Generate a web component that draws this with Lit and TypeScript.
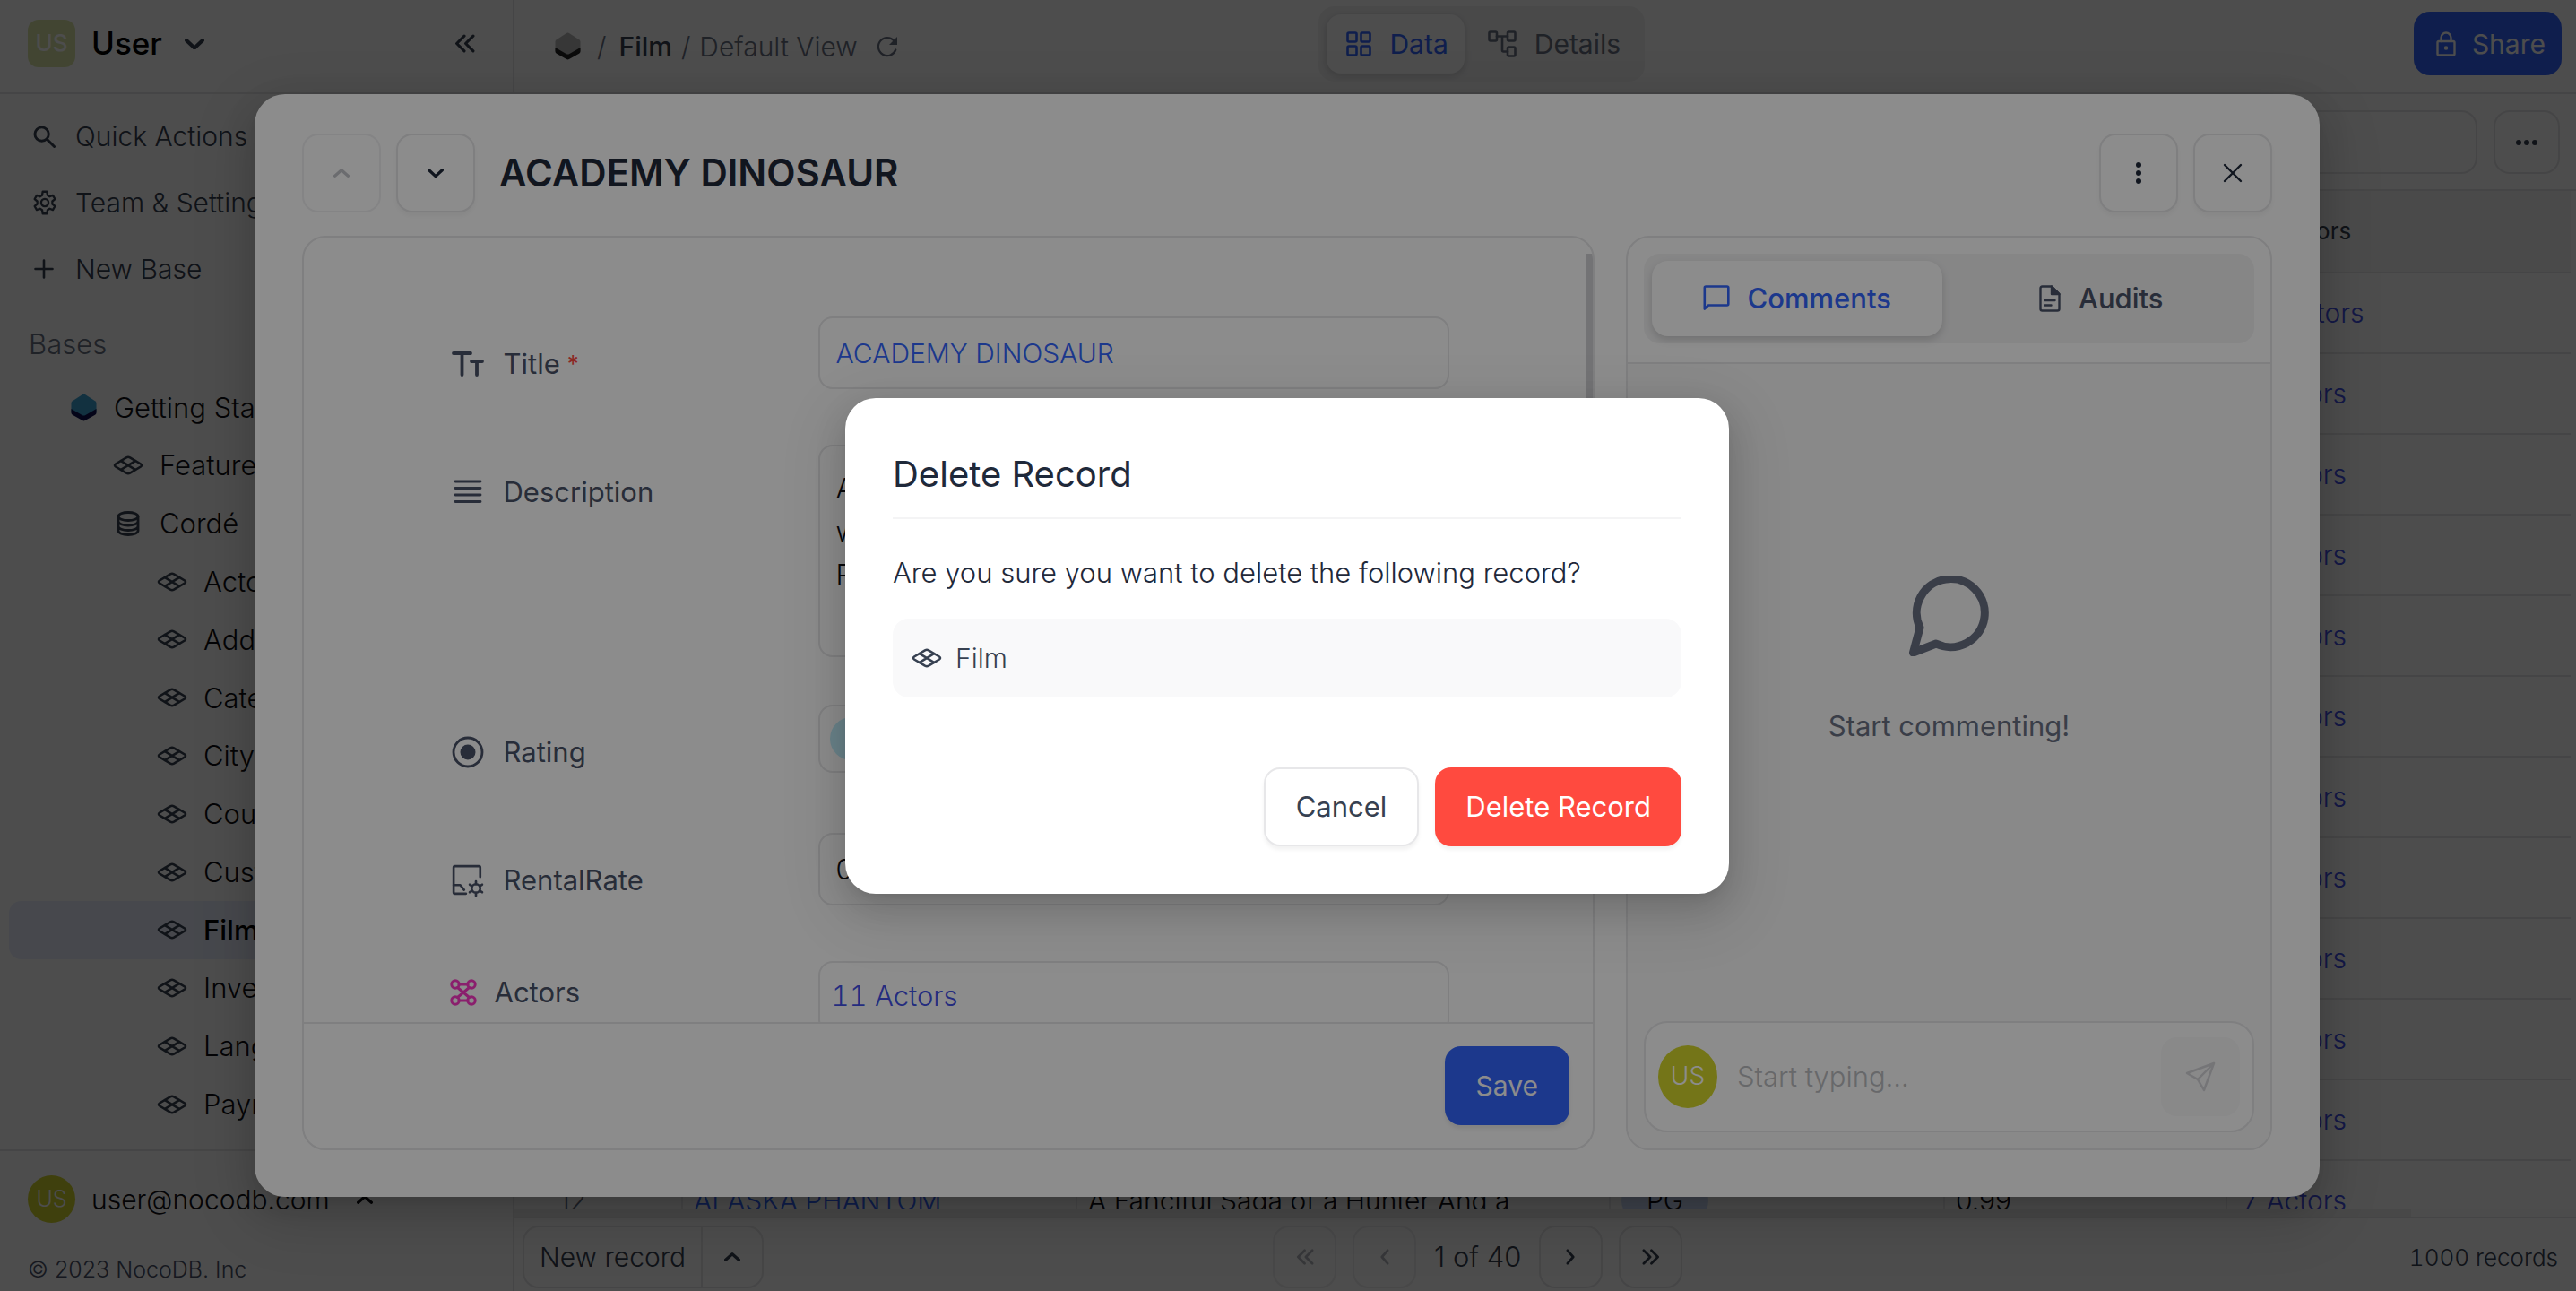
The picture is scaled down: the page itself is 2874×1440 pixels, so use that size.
import { LitElement, html, svg, css, nothing, TemplateResult } from "lit";
import { customElement, property } from "lit/decorators.js";
import { classMap } from "lit/directives/class-map.js";

const gear = svg`<path d="M12 15.500a3.500 3.500 0 1 0 0-7 3.500 3.500 0 0 0 0 7z"/><path d="M10 1.500h4l.6 3.500 2 1.200 3.100-1.100 2 3.500-2.500 2.100v2.600l2.500 2.100-2 3.500-3.100-1.100-2 1.200-.6 3.500h-4l-.6-3.500-2-1.200-3.100 1.100-2-3.500 2.500-2.100v-2.600l-2.500-2.100 2-3.500 3.100 1.100 2-1.200z"/>`;

const ICONS: Record<string, { box: string; body: TemplateResult; stroke?: number }> = {
  down: { box: "0 0 22 12", body: svg`<path d="M2 2l9 8.500 9-8.500"/>`, stroke: 4 },
  up: { box: "0 0 22 12", body: svg`<path d="M2 10l9-8 9 8"/>`, stroke: 4 },
  left: { box: "0 0 12 20", body: svg`<path d="M10 2L3 10l7 8"/>`, stroke: 3 },
  right: { box: "0 0 12 20", body: svg`<path d="M2 2l7 8-7 8"/>`, stroke: 3 },
  dleft: { box: "0 0 22 20", body: svg`<path d="M10.500 2L2.500 10l8 8M20 2l-8 8 8 8"/>`, stroke: 3 },
  dright: { box: "0 0 22 20", body: svg`<path d="M2 2l8 8-8 8M11.500 2l8 8-8 8"/>`, stroke: 3 },
  search: { box: "0 0 26 26", body: svg`<circle cx="10" cy="10" r="8"/><path d="M16 16l8.500 8.500"/>`, stroke: 3 },
  gear: { box: "0 0 24 24", body: gear, stroke: 2 },
  plus: { box: "0 0 24 24", body: svg`<path d="M12 2.500v19M2.500 12h19"/>`, stroke: 2.6 },
  table: {
    box: "0 0 34 22",
    body: svg`<path d="M15 2.300Q17 1.300 19 2.300L31 9.500Q33 11 31 12.500L19 19.700Q17 20.700 15 19.700L3 12.500Q1 11 3 9.500Z"/><path d="M9 6.200L25 15.800M25 6.200L9 15.800"/>`,
    stroke: 2.6,
  },
  database: {
    box: "0 0 26 28",
    body: svg`<ellipse cx="13" cy="6" rx="11" ry="4.500"/><path d="M2 6v16c0 2.500 5 4.500 11 4.500s11-2 11-4.500V6M2 11.500c0 2.500 5 4.500 11 4.500s11-2 11-4.500M2 17c0 2.500 5 4.500 11 4.500s11-2 11-4.500"/>`,
    stroke: 2.8,
  },
  base: {
    box: "0 0 30 32",
    body: svg`<path d="M2 8.500L13.500 1Q15 .2 16.500 1L28 8.500Q29.500 9.500 29.500 11v11L15 31 .5 22V11Q.5 9.500 2 8.500Z" fill="#3da4d6" stroke="none"/><path d="M.5 17.500L13.500 25q1.500.8 3 0l13-7.500V22q0 1.600-1.500 2.500L16.500 31q-1.500.8-3 0L2 24.500Q.5 23.600.5 22z" fill="#121252" stroke="none"/>`,
  },
  basegray: {
    box: "0 0 30 32",
    body: svg`<path d="M2 8.500L13.500 1Q15 .2 16.500 1L28 8.500Q29.500 9.500 29.500 11v11L15 31 .5 22V11Q.5 9.500 2 8.500Z" fill="#b8b8b8" stroke="none"/><path d="M.5 17.500L13.500 25q1.500.8 3 0l13-7.500V22q0 1.600-1.500 2.500L16.500 31q-1.500.8-3 0L2 24.500Q.5 23.600.5 22z" fill="#262626" stroke="none"/>`,
  },
  refresh: {
    box: "0 0 26 26",
    body: svg`<path d="M22.300 16.500A10 10 0 1 1 20.500 6.500"/><path d="M24 2v9h-9z" fill="currentColor" stroke="none"/>`,
    stroke: 2.2,
  },
  grid: {
    box: "0 0 28 28",
    body: svg`<rect x="1.500" y="1.500" width="10" height="10" rx="1.500"/><rect x="16.500" y="1.500" width="10" height="10" rx="1.500"/><rect x="1.500" y="16.500" width="10" height="10" rx="1.500"/><rect x="16.500" y="16.500" width="10" height="10" rx="1.500"/>`,
    stroke: 2.6,
  },
  flow: {
    box: "0 0 32 30",
    body: svg`<rect x="1.500" y="1.500" width="8.500" height="10" rx="1.500"/><rect x="22" y="1.500" width="8.500" height="10" rx="1.500"/><rect x="22" y="18.500" width="8.500" height="10" rx="1.500"/><path d="M10 6.500h12M16 6.500v15.500q0 1.500 1.500 1.500H22"/>`,
    stroke: 2.6,
  },
  lock: {
    box: "0 0 22 28",
    body: svg`<rect x="1.500" y="11" width="19" height="15.500" rx="1.500"/><path d="M5.500 11V7a5.500 5.500 0 0 1 11 0v4"/><circle cx="11" cy="18.500" r="2.300" fill="currentColor" stroke="none"/>`,
    stroke: 2.4,
  },
  hdots: { box: "0 0 26 8", body: svg`<g fill="currentColor" stroke="none"><circle cx="4" cy="4" r="3"/><circle cx="13" cy="4" r="3"/><circle cx="22" cy="4" r="3"/></g>` },
  vdots: { box: "0 0 8 26", body: svg`<g fill="currentColor" stroke="none"><circle cx="4" cy="4" r="3"/><circle cx="4" cy="13" r="3"/><circle cx="4" cy="22" r="3"/></g>` },
  close: { box: "0 0 22 22", body: svg`<path d="M2 2l18 18M20 2L2 20"/>`, stroke: 2.4 },
  bubble: {
    box: "0 0 30 30",
    body: svg`<path d="M1.800 26.500V3q0-1.500 1.500-1.500h23.500q1.500 0 1.500 1.500v18q0 1.500-1.500 1.500H6z"/>`,
    stroke: 2.6,
  },
  file: {
    box: "0 0 24 30",
    body: svg`<path d="M14 1.500H3.500Q1.500 1.500 1.500 3.500v23q0 2 2 2h17q2 0 2-2V10z"/><path d="M14 1.500V10h8.500z" fill="currentColor"/><path d="M6.500 17h11M6.500 22.500h7"/>`,
    stroke: 2.4,
  },
  chat: {
    box: "0 0 90 90",
    body: svg`<path d="M12 58A38 38 0 1 1 30 76L4.500 86z"/>`,
    stroke: 9,
  },
  send: {
    box: "0 0 34 34",
    body: svg`<path d="M32 2L2 13l12 7 7 12z"/><path d="M32 2L14 20"/>`,
    stroke: 2.4,
  },
  text: {
    box: "0 0 36 28",
    body: svg`<path d="M2 2h19M11.500 2v24M22 11h12M28 11v15"/>`,
    stroke: 3.8,
  },
  lines: { box: "0 0 36 28", body: svg`<path d="M4 2h28M4 9.500h28M4 17h28M4 24.500h28"/>`, stroke: 2.8 },
  radio: {
    box: "0 0 36 36",
    body: svg`<circle cx="18" cy="18" r="16"/><circle cx="18" cy="18" r="8.500" fill="currentColor" stroke="none"/>`,
    stroke: 2.8,
  },
  formula: {
    box: "0 0 34 34",
    body: svg`<path d="M30 13.500V3.500Q30 2 28.500 2h-25Q2 2 2 3.500v26Q2 31 3.500 31H15"/><path d="M2 22h7l4 5"/><path d="M25.500 18v3M25.500 30v3M19 21.500l2.500 1.500M32 21.500L29.500 23M19 29.500l2.500-1.500M32 29.500L29.500 28"/><circle cx="25.500" cy="25.500" r="4.500"/>`,
    stroke: 2.5,
  },
  links: {
    box: "0 0 30 30",
    body: svg`<circle cx="6" cy="6" r="4.200"/><circle cx="24" cy="6" r="4.200"/><circle cx="6" cy="24" r="4.200"/><circle cx="24" cy="24" r="4.200"/><path d="M10 6h10M10 24h10M8.500 9.500l13 11M21.500 9.500l-13 11"/>`,
    stroke: 3,
  },
};

function icon(name: string, width: number) {
  const { box, body, stroke } = ICONS[name];
  const [, , w, h] = box.split(" ").map(Number);
  return html`<svg
    class="icon"
    width=${width}
    height=${Math.round((width * h) / w)}
    viewBox=${box}
    fill="none"
    stroke="currentColor"
    stroke-width=${stroke ?? 2}
    stroke-linecap="round"
    stroke-linejoin="round"
    aria-hidden="true"
  >${body}</svg>`;
}

const shared = css`
  *,
  *::before,
  *::after {
    box-sizing: border-box;
  }
  .icon {
    display: block;
    flex: none;
  }
  button,
  input,
  textarea {
    font: inherit;
    color: inherit;
    margin: 0;
  }
  button {
    display: flex;
    align-items: center;
    justify-content: center;
    padding: 0;
    border: 0;
    background: none;
    white-space: nowrap;
  }
  a {
    color: inherit;
    text-decoration: none;
  }
  h1,
  h2,
  p,
  ul {
    margin: 0;
    padding: 0;
  }
  ul {
    list-style: none;
  }
  .outlined {
    border: 2px solid #e7e7e9;
    border-radius: 18px;
    background: #fff;
  }
  .avatar {
    flex: none;
    display: grid;
    place-items: center;
    border-radius: 50%;
    background: #d3d62c;
    color: #fff;
  }
`;

type Node = { icon: string; label: string; level: number; active?: boolean };

const TREE: Node[] = [
  { icon: "base", label: "Getting Started", level: 0 },
  { icon: "table", label: "Features", level: 1 },
  { icon: "database", label: "Cordé", level: 1 },
  { icon: "table", label: "Actor", level: 2 },
  { icon: "table", label: "Address", level: 2 },
  { icon: "table", label: "Category", level: 2 },
  { icon: "table", label: "City", level: 2 },
  { icon: "table", label: "Country", level: 2 },
  { icon: "table", label: "Customer", level: 2 },
  { icon: "table", label: "Film", level: 2, active: true },
  { icon: "table", label: "Inventory", level: 2 },
  { icon: "table", label: "Language", level: 2 },
  { icon: "table", label: "Payment", level: 2 },
];

@customElement("side-nav")
class SideNav extends LitElement {
  static styles = [
    shared,
    css`
      :host {
        display: flex;
        flex-direction: column;
        border-right: 2px solid #e7e7e9;
        background: #fff;
        color: #374151;
      }
      .workspace {
        display: flex;
        align-items: center;
        height: 105px;
        padding: 0 42px 6px 31px;
        border-bottom: 2px solid #e7e7e9;
      }
      .square {
        display: grid;
        place-items: center;
        width: 53px;
        height: 53px;
        border-radius: 12px;
        background: #dbe8a8;
        color: #fff;
        font-size: 26px;
        font-weight: 500;
      }
      .name {
        margin: 0 25px 0 18px;
        font-size: 35px;
        font-weight: 500;
        color: #000;
      }
      .collapse {
        margin-left: auto;
      }
      .menu {
        padding-top: 10px;
      }
      .menu button {
        height: 74px;
        gap: 22px;
        padding-left: 36px;
        font-size: 30px;
      }
      .slot {
        display: grid;
        place-items: center;
        width: 26px;
      }
      .heading {
        padding: 26px 32px 17px;
        line-height: 42px;
        color: #6a7184;
        font-size: 31px;
        font-weight: 300;
      }
      .tree {
        flex: 1;
        display: flex;
        flex-direction: column;
        padding: 0 10px 18px;
        color: #101015;
      }
      .node {
        flex: 1;
        display: flex;
        align-items: center;
        gap: 18px;
        border-radius: 14px;
        white-space: nowrap;
      }
      .node svg {
        color: #374151;
      }
      .level0 {
        padding-left: 68px;
        gap: 19px;
      }
      .level1 {
        padding-left: 116px;
      }
      .level2 {
        padding-left: 165px;
      }
      .glyph {
        display: grid;
        place-items: center;
        min-width: 30px;
      }
      .level1 .glyph {
        width: 34px;
      }
      .active {
        background: #ebf0ff;
        color: #000;
        font-weight: 500;
      }
      .foot {
        border-top: 2px solid #e7e7e9;
        padding: 27px 31px 7px;
      }
      .account {
        gap: 18px;
        color: #101015;
        font-size: 30px;
      }
      .account .avatar {
        width: 53px;
        height: 53px;
        font-size: 25px;
      }
      .account .icon {
        margin-left: 12px;
      }
      .legal {
        margin-top: 35px;
        line-height: 34px;
        font-size: 25px;
        color: #4a5268;
      }
    `,
  ];

  render() {
    return html`
      <div class="workspace">
        <span class="square">US</span>
        <span class="name">User</span>
        ${icon("down", 22)}
        <button class="collapse" aria-label="Collapse sidebar">${icon("dleft", 23)}</button>
      </div>
      <div class="menu">
        <button><span class="slot">${icon("search", 25)}</span>Quick Actions</button>
        <button><span class="slot">${icon("gear", 28)}</span>Team &amp; Settings</button>
        <button><span class="slot">${icon("plus", 24)}</span>New Base</button>
      </div>
      <h2 class="heading">Bases</h2>
      <ul class="tree">
        ${TREE.map(
          (n) => html`<li class=${classMap({ node: true, active: !!n.active, [`level${n.level}`]: true })}>
            <span class="glyph">${icon(n.icon, n.icon === "table" ? 34 : n.icon === "base" ? 29 : 26)}</span>${n.label}
          </li>`
        )}
      </ul>
      <div class="foot">
        <button class="account">
          <span class="avatar">US</span>user@nocodb.com${icon("up", 18)}
        </button>
        <p class="legal">© 2023 NocoDB. Inc</p>
      </div>
    `;
  }
}

type Film = [title: string, description: string, rating: string, rate: string, actors: number];

const FILMS: Film[] = [
  ["ACADEMY DINOSAUR", "A Epic Drama of a Feminist And a", "PG", "0.99", 11],
  ["ACE GOLDFINGER", "A Astounding Epistle of a Database", "G", "4.99", 4],
  ["ADAPTATION HOLES", "A Astounding Reflection of a", "NC-17", "2.99", 5],
  ["AFFAIR PREJUDICE", "A Fanciful Documentary of a Frisbee", "G", "2.99", 5],
  ["AFRICAN EGG", "A Fast-Paced Documentary of a Pastry", "G", "2.99", 5],
  ["AGENT TRUMAN", "A Intrepid Panorama of a Robot", "PG", "2.99", 7],
  ["AIRPLANE SIERRA", "A Touching Saga of a Hunter And a", "PG-13", "4.99", 5],
  ["AIRPORT POLLOCK", "A Epic Tale of a Moose And a Girl", "R", "4.99", 4],
  ["ALABAMA DEVIL", "A Thoughtful Panorama of a", "PG-13", "2.99", 9],
  ["ALADDIN CALENDAR", "A Action-Packed Tale of a Man", "NC-17", "4.99", 8],
  ["ALAMO VIDEOTAPE", "A Boring Epistle of a Butler And a", "G", "0.99", 4],
  ["ALASKA PHANTOM", "A Fanciful Saga of a Hunter And a", "PG", "0.99", 7],
];

@customElement("film-grid")
class FilmGrid extends LitElement {
  static styles = [
    shared,
    css`
      :host {
        display: flex;
        flex-direction: column;
        min-width: 0;
        background: #fff;
        color: #374151;
      }
      .top {
        display: grid;
        grid-template-columns: 5fr auto 6fr;
        align-items: center;
        height: 105px;
        padding: 0 16px 6px 45px;
        border-bottom: 2px solid #e7e7e9;
      }
      .crumbs {
        display: flex;
        align-items: center;
        gap: 10px;
        padding-top: 6px;
        color: #6a7184;
        white-space: nowrap;
        font-size: 30px;
      }
      .crumbs .root {
        display: flex;
        align-items: center;
        gap: 18px;
        padding-right: 4px;
      }
      .crumbs .table {
        color: #374151;
        font-weight: 500;
      }
      .crumbs .icon:last-child {
        margin-left: 10px;
      }
      .tabs {
        display: flex;
        gap: 4px;
        padding: 9px;
        border-radius: 18px;
        background: #f4f4f5;
      }
      .tab {
        height: 66px;
        padding: 0 18px 0 22px;
        gap: 20px;
        border-radius: 16px;
        color: #6a7184;
        font-size: 30px;
        font-weight: 400;
      }
      .tab.on {
        background: #fff;
        color: #3366ff;
        box-shadow: 0 2px 8px rgba(0, 0, 0, 0.18);
      }
      .share {
        justify-self: end;
        height: 71px;
        padding: 0 18px 0 25px;
        gap: 18px;
        border-radius: 18px;
        background: #3366ff;
        color: #fff;
        font-size: 30px;
        font-weight: 400;
      }
      .tools {
        display: flex;
        justify-content: flex-end;
        gap: 18px;
        padding: 18px 18px 17px;
        border-bottom: 2px solid #e7e7e9;
      }
      .tools input {
        width: 440px;
        padding: 0 20px;
      }
      .tools button {
        width: 74px;
        height: 71px;
      }
      .sheet {
        flex: 1;
        min-height: 0;
        overflow: hidden;
      }
      table {
        width: calc(100% - 6px);
        table-layout: fixed;
        border-collapse: separate;
        border-spacing: 0;
      }
      th,
      td {
        height: 90px;
        padding: 0 12px;
        border-bottom: 2px solid #e7e7e9;
        border-right: 2px solid #ececee;
        text-align: left;
        font-weight: 300;
        white-space: nowrap;
        overflow: hidden;
      }
      th:last-child,
      td:last-child {
        border-right: 0;
      }
      th {
        height: 92px;
        background: #f7f7f8;
        font-size: 26px;
        font-weight: 400;
      }
      th .in {
        display: flex;
        align-items: center;
        gap: 12px;
        padding-left: 4px;
      }
      td {
        color: #101015;
        font-size: 30px;
      }
      td.title {
        color: #3366ff;
      }
      td.actors,
      th.actors {
        padding-left: 16px;
      }
      td.actors {
        color: #4351e8;
        font-variant-numeric: tabular-nums;
      }
      td.no {
        padding-left: 50px;
        color: #6a7184;
      }
      .c-no {
        width: 188px;
      }
      .c-title {
        width: 440px;
      }
      .c-desc {
        width: 595px;
      }
      .c-rating {
        width: 373px;
      }
      .c-rate {
        width: 315px;
      }
      .chip {
        display: inline-block;
        padding: 0 28px;
        line-height: 48px;
        border-radius: 24px;
        background: #cfdffe;
      }
      .track {
        height: 8px;
        background: #fbfbfb;
      }
      .thumb {
        width: 92%;
        height: 100%;
        background: #f0f0f1;
      }
      .pager {
        display: grid;
        grid-template-columns: 6fr auto 7fr;
        align-items: center;
        height: 83px;
        padding: 4px 20px 0 9px;
        border-top: 2px solid #e7e7e9;
      }
      .new {
        display: flex;
        justify-self: start;
        height: 70px;
        font-size: 30px;
      }
      .new button:first-child {
        padding: 0 17px;
        border-right: 2px solid #e7e7e9;
      }
      .new button:last-child {
        width: 66px;
      }
      .pages {
        display: flex;
        align-items: center;
        gap: 18px;
      }
      .pages span {
        padding: 0 2px;
      }
      .pages button {
        width: 71px;
        height: 70px;
      }
      .pages button:disabled {
        border-color: #efeff1;
        color: #b4b7be;
      }
      .count {
        justify-self: end;
        padding-top: 4px;
        font-size: 26px;
        font-variant-numeric: tabular-nums;
      }
    `,
  ];

  render() {
    return html`
      <header class="top">
        <nav class="crumbs">
          <span class="root">${icon("basegray", 29)}<span>/</span></span><a class="table" href="#film">Film</a><span>/</span
          ><a href="#view">Default View</a>${icon("refresh", 26)}
        </nav>
        <div class="tabs">
          <button class="tab on">${icon("grid", 28)}Data</button>
          <button class="tab">${icon("flow", 32)}Details</button>
        </div>
        <button class="share">${icon("lock", 22)}Share</button>
      </header>
      <div class="tools">
        <input class="outlined" type="search" aria-label="Search records" />
        <button class="outlined" aria-label="More">${icon("hdots", 26)}</button>
      </div>
      <div class="sheet">
        <table>
          <colgroup>
            <col class="c-no" /><col class="c-title" /><col class="c-desc" /><col class="c-rating" /><col
              class="c-rate"
            /><col />
          </colgroup>
          <thead>
            <tr>
              <th>#</th>
              <th>Title</th>
              <th>Description</th>
              <th>Rating</th>
              <th>RentalRate</th>
              <th class="actors"><span class="in">${icon("links", 26)}Actors</span></th>
            </tr>
          </thead>
          <tbody>
            ${FILMS.map(
              ([title, description, rating, rate, actors], i) => html`<tr>
                <td class="no">${i + 1}</td>
                <td class="title">${title}</td>
                <td>${description}</td>
                <td><span class="chip">${rating}</span></td>
                <td>${rate}</td>
                <td class="actors">${actors} Actors</td>
              </tr>`
            )}
          </tbody>
        </table>
      </div>
      <div class="track"><div class="thumb"></div></div>
      <footer class="pager">
        <div class="new outlined">
          <button>New record</button>
          <button aria-label="New record options">${icon("up", 18)}</button>
        </div>
        <div class="pages">
          <button class="outlined" disabled aria-label="First page">${icon("dleft", 20)}</button>
          <button class="outlined" disabled aria-label="Previous page">${icon("left", 11)}</button>
          <span>1 of 40</span>
          <button class="outlined" aria-label="Next page">${icon("right", 11)}</button>
          <button class="outlined" aria-label="Last page">${icon("dright", 20)}</button>
        </div>
        <span class="count">1000 records</span>
      </footer>
    `;
  }
}

@customElement("record-panel")
class RecordPanel extends LitElement {
  static styles = [
    shared,
    css`
      :host {
        display: flex;
        flex-direction: column;
        padding: 44px 53px 52px;
        border-radius: 34px;
        background: #fff;
        color: #4a5268;
        box-shadow: 0 6px 14px -8px rgba(0, 0, 0, 0.12), 0 14px 36px rgba(0, 0, 0, 0.14),
          0 20px 62px 18px rgba(0, 0, 0, 0.08);
      }
      .head {
        display: flex;
        align-items: center;
        gap: 17px;
        margin-bottom: 26px;
        color: #1f293a;
      }
      .head button {
        width: 88px;
        height: 88px;
        box-shadow: 0 4px 4px rgba(0, 0, 0, 0.04);
      }
      .head button:disabled {
        border-color: #f1f1f3;
        color: #c4c5cb;
        box-shadow: none;
      }
      h1 {
        flex: 1;
        padding-left: 10px;
        font-size: 42px;
        line-height: 60px;
        font-weight: 600;
      }
      .columns {
        flex: 1;
        min-height: 0;
        display: grid;
        grid-template-columns: 2fr 1fr;
        gap: 35px;
      }
      .pane {
        position: relative;
        display: flex;
        flex-direction: column;
        min-height: 0;
        border: 2px solid #e7e7e9;
        border-radius: 26px;
        overflow: hidden;
      }
      .form {
        flex: 1;
        min-height: 0;
        overflow: hidden;
        padding-top: 88px;
      }
      .field {
        display: grid;
        grid-template-columns: 413px 704px;
        justify-content: center;
        align-items: start;
        min-height: 143px;
      }
      .field.tall {
        min-height: 290px;
      }
      .label {
        display: flex;
        align-items: center;
        gap: 22px;
        padding: 31px 0 0 4px;
        line-height: 44px;
        font-weight: 400;
      }
      .label.high {
        gap: 20px;
        padding: 13px 0 0 2px;
      }
      .req {
        margin-left: -14px;
        color: #ff4a3f;
        font-size: 26px;
      }
      .pinkish {
        color: #fc3ac6;
      }
      .control {
        display: flex;
        align-items: center;
        width: 100%;
        height: 81px;
        padding: 0 18px;
        border: 2px solid #e7e7e9;
        border-radius: 16px;
        background: #fff;
        color: #101015;
      }
      textarea.control {
        display: block;
        height: 237px;
        padding: 23px 18px;
        line-height: 48px;
        resize: none;
        overflow: hidden;
      }
      .control.blue {
        color: #3366ff;
        font-size: 30px;
      }
      .control.link {
        padding: 6px 13px 0;
        align-items: flex-start;
        line-height: 62px;
        color: #4351e8;
        font-variant-numeric: tabular-nums;
      }
      .control.pick {
        justify-content: flex-start;
        height: 76px;
        padding: 0 11px;
      }
      .chip {
        padding: 0 28px;
        line-height: 48px;
        border-radius: 24px;
        background: #c1eefb;
      }
      .thumb {
        position: absolute;
        top: 18px;
        right: 0;
        width: 8px;
        height: 320px;
        background: #d1d1d6;
      }
      .actions {
        display: flex;
        justify-content: flex-end;
        padding: 25px 26px 26px;
        border-top: 2px solid #e7e7e9;
      }
      .save {
        height: 88px;
        padding: 0 35px;
        border-radius: 18px;
        background: #3366ff;
        color: #fff;
        font-size: 30px;
        font-weight: 400;
        box-shadow: 0 4px 4px rgba(0, 0, 0, 0.08);
      }
      .tabbar {
        padding: 18px 18px 21px;
        border-bottom: 2px solid #e7e7e9;
      }
      .tabs {
        display: grid;
        grid-template-columns: 1fr 1fr;
        gap: 16px;
        padding: 8px 9px;
        border-radius: 18px;
        background: #f4f4f5;
      }
      .tab {
        height: 84px;
        gap: 20px;
        border-radius: 18px;
        font-weight: 500;
      }
      .tab.on {
        background: #fff;
        color: #3366ff;
        box-shadow: 0 4px 10px rgba(0, 0, 0, 0.16);
      }
      .thread {
        flex: 1;
        display: flex;
        flex-direction: column;
        background: #f9f9fa;
        padding: 0 18px 18px;
      }
      .empty {
        flex: 1;
        display: flex;
        flex-direction: column;
        align-items: center;
        justify-content: center;
        gap: 56px;
        padding-bottom: 71px;
        line-height: 44px;
        font-weight: 400;
        color: #6a7184;
      }
      .compose {
        display: flex;
        align-items: center;
        gap: 22px;
        height: 124px;
        padding: 0 14px;
        border: 2px solid #e7e7e9;
        border-radius: 26px;
        background: #fff;
      }
      .compose .avatar {
        width: 66px;
        height: 70px;
        font-size: 28px;
      }
      .compose input {
        flex: 1;
        min-width: 0;
        padding: 0;
        border: 0;
        background: none;
      }
      .compose input::placeholder {
        color: #bcbdc2;
      }
      .compose button {
        width: 88px;
        height: 88px;
        border-radius: 18px;
        background: #f9f9fa;
        color: #d5d5d9;
      }
    `,
  ];

  private label(id: string, glyph: string, width: number, text: string, required = false) {
    return html`<label class="label" for=${id}
      >${icon(glyph, width)}<span>${text}</span>${required ? html`<span class="req">*</span>` : nothing}</label
    >`;
  }

  render() {
    return html`
      <div class="head">
        <button class="outlined" disabled aria-label="Previous record">${icon("up", 18)}</button>
        <button class="outlined" aria-label="Next record">${icon("down", 18)}</button>
        <h1>ACADEMY DINOSAUR</h1>
        <button class="outlined" aria-label="Record menu">${icon("vdots", 8)}</button>
        <button class="outlined" aria-label="Close">${icon("close", 22)}</button>
      </div>
      <div class="columns">
        <section class="pane">
          <div class="form">
            <div class="field">
              ${this.label("title", "text", 36, "Title", true)}
              <input id="title" class="control blue" .value=${"ACADEMY DINOSAUR"} />
            </div>
            <div class="field tall">
              ${this.label("description", "lines", 36, "Description")}
              <textarea
                id="description"
                class="control"
                .value=${"A Epic Drama of a Feminist And a Mad\nwho must Battle a Teacher in The\nRockies"}
              ></textarea>
            </div>
            <div class="field">
              ${this.label("rating", "radio", 36, "Rating")}
              <button id="rating" class="control pick" aria-haspopup="listbox"><span class="chip">PG</span></button>
            </div>
            <div class="field">
              ${this.label("rate", "formula", 36, "RentalRate")}
              <input id="rate" class="control" .value=${"0.99"} />
            </div>
            <div class="field">
              <div class="label high"><span class="pinkish">${icon("links", 30)}</span><span>Actors</span></div>
              <div class="control link"><a href="#actors">11 Actors</a></div>
            </div>
          </div>
          <div class="thumb"></div>
          <div class="actions"><button class="save">Save</button></div>
        </section>
        <section class="pane">
          <div class="tabbar">
            <div class="tabs">
              <button class="tab on">${icon("bubble", 30)}Comments</button>
              <button class="tab">${icon("file", 24)}Audits</button>
            </div>
          </div>
          <div class="thread">
            <div class="empty">${icon("chat", 90)}<p>Start commenting!</p></div>
            <div class="compose">
              <span class="avatar">US</span>
              <input type="text" placeholder="Start typing..." aria-label="Comment" />
              <button aria-label="Send">${icon("send", 34)}</button>
            </div>
          </div>
        </section>
      </div>
    `;
  }
}

@customElement("delete-dialog")
class DeleteDialog extends LitElement {
  @property() record = "Film";

  static styles = [
    shared,
    css`
      :host {
        display: block;
        width: 986px;
        padding: 53px;
        border-radius: 34px;
        background: #fff;
        color: #1f293a;
        box-shadow: 0 6px 14px -8px rgba(0, 0, 0, 0.12), 0 14px 36px rgba(0, 0, 0, 0.14),
          0 20px 62px 18px rgba(0, 0, 0, 0.08);
      }
      h2 {
        padding: 3px 0 20px;
        border-bottom: 2px solid #f4f4f5;
        line-height: 57px;
        font-size: 40px;
        font-weight: 400;
      }
      p {
        padding: 36px 0 27px;
        line-height: 48px;
      }
      .what {
        display: flex;
        align-items: center;
        gap: 15px;
        height: 88px;
        padding: 0 21px;
        border-radius: 18px;
        background: #f9f9fa;
        color: #374151;
        font-size: 30px;
      }
      .buttons {
        display: flex;
        justify-content: flex-end;
        gap: 18px;
        margin-top: 78px;
        font-weight: 400;
      }
      .buttons button {
        height: 88px;
        padding: 0 34px;
        border-radius: 18px;
        color: #374151;
        box-shadow: 0 4px 4px rgba(0, 0, 0, 0.05);
      }
      .buttons .danger {
        background: #ff4a3f;
        color: #fff;
      }
    `,
  ];

  render() {
    return html`
      <h2>Delete Record</h2>
      <p>Are you sure you want to delete the following record?</p>
      <div class="what">${icon("table", 34)}${this.record}</div>
      <div class="buttons">
        <button class="outlined">Cancel</button>
        <button class="danger">Delete Record</button>
      </div>
    `;
  }
}

@customElement("app-root")
class AppRoot extends LitElement {
  static styles = [
    shared,
    css`
      :host {
        display: block;
        position: relative;
        height: 100vh;
        overflow: hidden;
        font-family: Inter, "Liberation Sans", sans-serif;
        font-size: 31px;
        font-weight: 300;
        line-height: 1.4;
      }
      .page {
        display: grid;
        grid-template-columns: 574px minmax(0, 1fr);
        height: 100%;
      }
      .mask {
        position: absolute;
        inset: 0;
        background: rgba(0, 0, 0, 0.45);
      }
      .record {
        display: grid;
        padding: 105px 286px 105px 284px;
      }
      .confirm {
        display: grid;
        place-items: center;
        padding-right: 2px;
      }
      .record > *,
      .page > * {
        min-height: 0;
      }
    `,
  ];

  render() {
    return html`
      <div class="page">
        <side-nav></side-nav>
        <film-grid></film-grid>
      </div>
      <div class="mask record">
        <record-panel role="dialog" aria-label="Expanded record"></record-panel>
      </div>
      <div class="mask confirm">
        <delete-dialog role="alertdialog" aria-label="Delete Record" record="Film"></delete-dialog>
      </div>
    `;
  }
}
